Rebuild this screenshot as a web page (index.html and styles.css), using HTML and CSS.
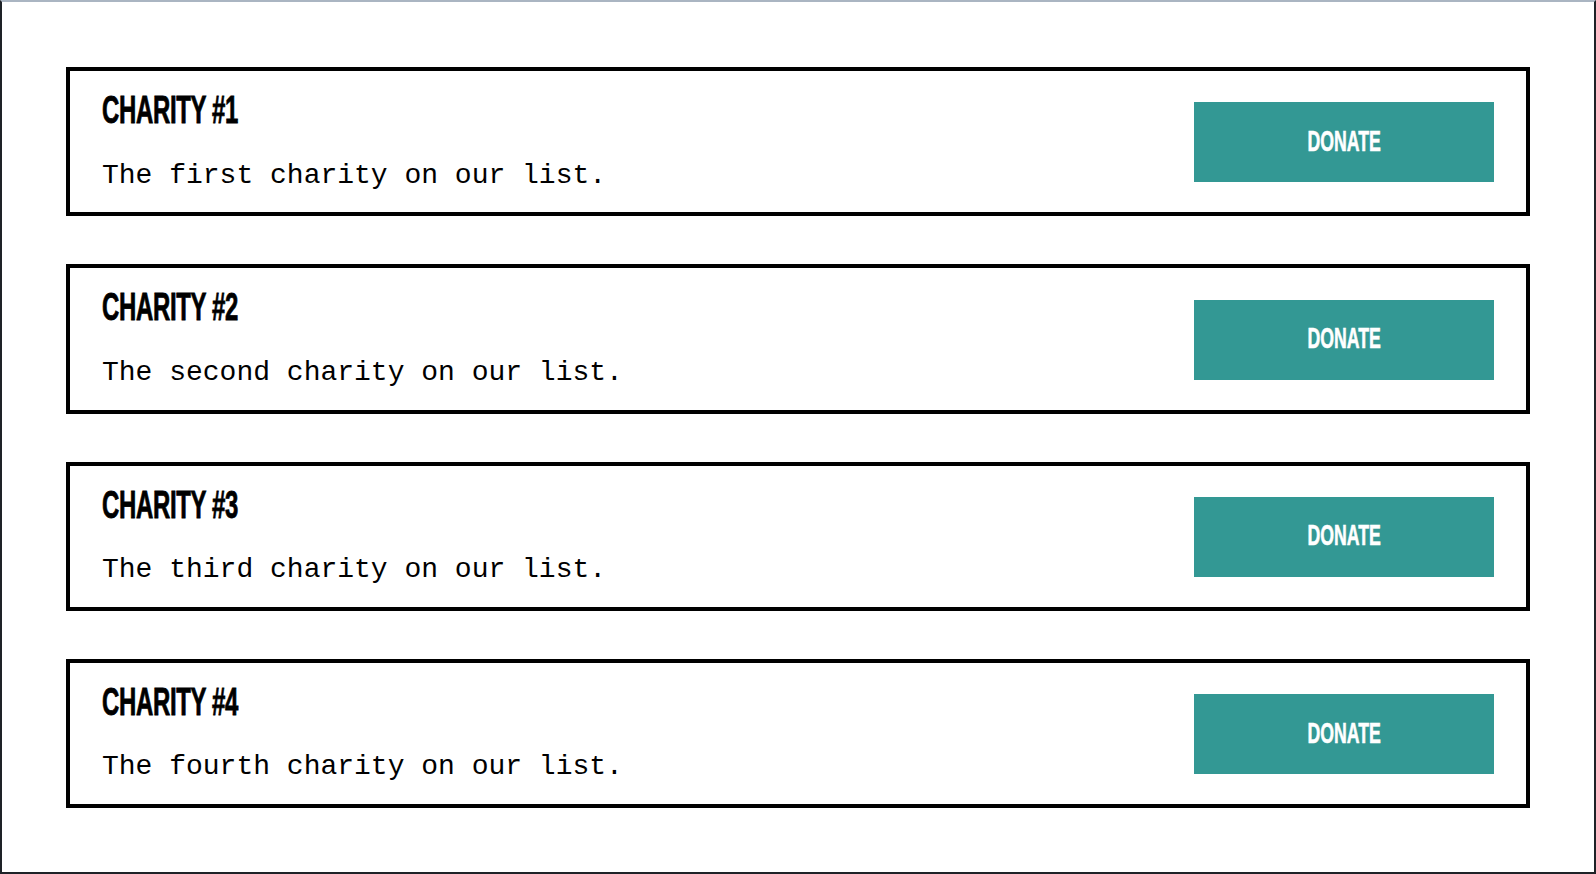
FILE: index.html
```html
<!DOCTYPE html>
<html lang="en">
<head>
  <meta charset="UTF-8" />
  <title>Charities</title>
  <link rel="stylesheet" href="styles.css">
</head>
<body>

  <div class="charity-list">
    <div class="charity">
      <div class="charity-info">
        <h2>Charity #1</h2>
        <p>The first charity on our list.</p>
      </div>
      <button class="donate-btn"><span>Donate</span></button>
    </div>

    <div class="charity">
      <div class="charity-info">
        <h2>Charity #2</h2>
        <p>The second charity on our list.</p>
      </div>
      <button class="donate-btn"><span>Donate</span></button>
    </div>

    <div class="charity">
      <div class="charity-info">
        <h2>Charity #3</h2>
        <p>The third charity on our list.</p>
      </div>
      <button class="donate-btn"><span>Donate</span></button>
    </div>

    <div class="charity">
      <div class="charity-info">
        <h2>Charity #4</h2>
        <p>The fourth charity on our list.</p>
      </div>
      <button class="donate-btn"><span>Donate</span></button>
    </div>
  </div>

</body>
</html>
```

FILE: styles.css
```css
html {
  height: 100%;
}
body {
  margin: 0;
  height: 100%;
  box-sizing: border-box;
  border: 2px solid #1e2227;
  border-top-color: #aab5c2;
  padding: 65px 64px 0;
  background: white;
  color: black;
  overflow: hidden;
}

/* List of cards */
.charity-list {
  display: flex;
  flex-direction: column;
  gap: 48px;
}

.charity {
  display: flex;
  justify-content: space-between;
  align-items: center;
  border: 4px solid black;
  padding: 22px 32px 20.8px;
}

.charity-info h2 {
  margin: 0 0 32.5px;
  font-family: "Liberation Sans", Arial, sans-serif;
  font-weight: bold;
  font-size: 38px;
  line-height: 34px;
  letter-spacing: -0.5px;
  text-transform: uppercase;
  -webkit-text-stroke: 0.8px black;
  transform: scaleX(0.63);
  transform-origin: left center;
}

.charity-info p {
  margin: 0;
  font-family: "Liberation Mono", "Courier New", monospace;
  font-size: 28px;
  line-height: 32px;
}

.donate-btn {
  width: 300px;
  height: 80px;
  flex-shrink: 0;
  margin: 0;
  padding: 0 0 2px;
  border: none;
  border-radius: 0;
  background-color: #339894;
  color: white;
  cursor: pointer;
  display: flex;
  align-items: center;
  justify-content: center;
  align-self: center;
}
.donate-btn span {
  display: inline-block;
  font-family: "Liberation Sans", Arial, sans-serif;
  font-weight: bold;
  font-size: 29px;
  line-height: 29px;
  text-transform: uppercase;
  -webkit-text-stroke: 0.6px white;
  transform: scaleX(0.61);
}
.donate-btn:hover {
  background-color: #2c8884;
}
```
